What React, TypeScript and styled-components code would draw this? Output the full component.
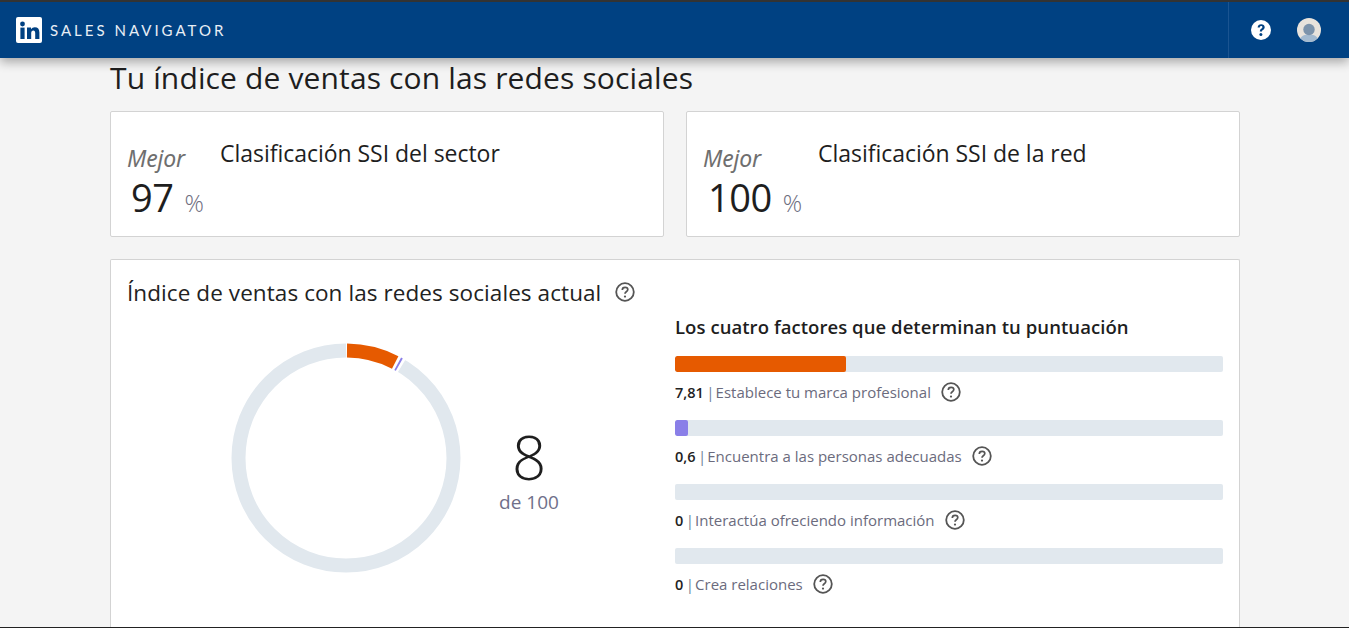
import React from "react";
import styled, { createGlobalStyle } from "styled-components";

const Global = createGlobalStyle`
  html, body { margin: 0; padding: 0; height: 100%; overflow: hidden; background: #f4f4f4; }
  body { font-family: "Open Sans", "Noto Sans", "Liberation Sans", sans-serif; color: #1f1f1f; }
`;
const Page = styled.div`
  height: 628px; box-sizing: border-box; overflow: hidden;
  display: flex; flex-direction: column;
  border-top: 2px solid #333; border-bottom: 1px solid #222;
`;
const Header = styled.header`
  flex: none; height: 56px; background: #004182; display: flex; align-items: stretch;
  box-shadow: 0 4px 10px rgba(0,0,0,.32); position: relative; z-index: 1;
`;
const Brand = styled.div`
  flex: 1; display: flex; align-items: center; padding-left: 16px; gap: 8px;
`;
const BrandName = styled.span`
  color: #e8eef5; font-size: 15px; letter-spacing: 3px; font-family: "Lato", sans-serif;
`;
const Actions = styled.div`
  width: 121px; border-left: 1px solid #1a5491; display: flex; align-items: center;
  padding-left: 22px; gap: 26px; box-sizing: border-box;
`;
const Main = styled.main`
  flex: 1; min-height: 0; width: 1130px; margin-left: 110px; display: flex; flex-direction: column;
`;
const Title = styled.h1`
  margin: 0; font-weight: 400; font-size: 30px; line-height: 40px; height: 53px;
  color: #1e1e1e; letter-spacing: .14px;
`;
const Cards = styled.div`
  display: grid; grid-template-columns: 554px 554px; gap: 22px;
`;
const Card = styled.section`
  height: 126px; box-sizing: border-box; background: #fff; border: 1px solid #d3d3d3; border-radius: 2px;
  display: flex; align-items: flex-start; padding: 29px 0 0 16px;
`;
const Score = styled.div`
  width: ${(p: { $wide: number }) => p.$wide}px; flex: none;
`;
const Best = styled.div`
  font-style: italic; font-size: 23px; line-height: 34px; color: #6f6f6f; font-family: "Noto Sans", sans-serif; letter-spacing: -.2px;
`;
const Pct = styled.div`
  display: flex; align-items: baseline; padding-left: ${(p: { $pad: number }) => p.$pad}px; margin-top: -3px; line-height: 50px;
`;
const Num = styled.span`font-size: 38px; color: #1e1e1e; letter-spacing: -.5px;`;
const Sign = styled.span`font-size: 24px; font-weight: 300; color: #6e6e80; margin-left: 11px;`;
const CardTitle = styled.h2`
  margin: -3px 0 0; font-weight: 400; font-size: 23px; line-height: 30px; color: #1e1e1e; letter-spacing: -.03px;
`;
const Panel = styled.section`
  margin-top: 22px; flex: 1; min-height: 0; background: #fff; border: 1px solid #d3d3d3; border-bottom: 0;
  border-radius: 2px 2px 0 0; display: flex; flex-direction: column; padding: 17px 16px 0;
`;
const PanelHead = styled.div`display: flex; align-items: center; gap: 14px; height: 30px;`;
const PanelTitle = styled.h2`
  margin: 2px 0 0; font-weight: 400; font-size: 22.5px; line-height: 30px; color: #222; letter-spacing: .08px;
`;
const Body = styled.div`display: flex;`;
const Chart = styled.div`
  width: 548px; flex: none; display: flex; align-items: flex-start; padding: 36px 0 0 104px; box-sizing: border-box;
`;
const Total = styled.div`
  margin-left: 38px; width: 60px; display: flex; flex-direction: column; align-items: center; padding-top: 81px;
`;
const Big = styled.div`font-size: 60px; line-height: 66px; font-weight: 300; color: #1e1e1e;`;
const Of = styled.div`font-size: 19px; line-height: 24px; color: #70708a; white-space: nowrap;`;
const Factors = styled.div`flex: 1; padding-top: 7px;`;
const FactorsTitle = styled.h3`
  margin: 0 0 16px; font-size: 18.5px; line-height: 26px; font-weight: 600; color: #1e1e1e; letter-spacing: .06px;
`;
const Factor = styled.div`height: 64px;`;
const Track = styled.div`height: 16px; background: #e1e8ee; border-radius: 2px; overflow: hidden;`;
const Fill = styled.div<{ $color: string }>`height: 100%; background: ${p => p.$color}; border-radius: 2px;`;
const FactorLabel = styled.div`
  display: flex; align-items: center; height: 24px; margin-top: 8px; font-size: 15px; color: #6b6b7d;
`;
const Val = styled.b`font-size: 14.5px; font-weight: 600; color: #222;`;
const Bar = styled.span`margin: 0 1px 0 2.5px; color: #6b7f99;`;
const HelpWrap = styled.span`display: inline-flex; margin-left: 10px;`;

const Help = ({ size = 20 }: { size?: number }) => (
  <svg width={size} height={size} viewBox="0 0 20 20" fill="none">
    <circle cx="10" cy="10" r="8.8" stroke="#555" strokeWidth="1.8" />
    <path d="M7.3 7.9c0-1.6 1.2-2.6 2.8-2.6s2.7 1 2.7 2.3c0 1-.6 1.6-1.5 2.2-.9.6-1.3 1-1.3 2" stroke="#555" strokeWidth="1.7" />
    <circle cx="10" cy="14.6" r="1.1" fill="#555" />
  </svg>
);
const Logo = () => (
  <svg width="26" height="26" viewBox="0 0 26 26">
    <rect width="26" height="26" rx="2" fill="#fff" />
    <circle cx="6.5" cy="7" r="2.4" fill="#004182" />
    <rect x="4.4" y="10.6" width="4.2" height="11.4" fill="#004182" />
    <path d="M11 10.6h4v1.7c.8-1.3 2.2-2 3.8-2 3.1 0 4.6 1.9 4.6 5.1V22h-4.2v-5.8c0-1.7-.6-2.6-1.9-2.6s-2.1 1-2.1 2.6V22H11z" fill="#004182" />
  </svg>
);
const HeadHelp = () => (
  <svg width="20" height="20" viewBox="0 0 20 20">
    <circle cx="10" cy="10" r="10" fill="#fff" />
    <path d="M6.6 7.6C6.7 5.5 8.1 4.3 10.2 4.3c2.1 0 3.5 1.2 3.5 3 0 1.3-.7 2-1.7 2.7-.8.5-1 .8-1 1.6H8.8c0-1.5.4-2.2 1.4-2.9.8-.5 1.2-.9 1.2-1.5 0-.7-.5-1.1-1.2-1.1-.8 0-1.3.5-1.4 1.5z" fill="#004182" />
    <circle cx="9.9" cy="14.4" r="1.5" fill="#004182" />
  </svg>
);
const Avatar = () => (
  <svg width="24" height="24" viewBox="0 0 24 24">
    <defs><clipPath id="av"><circle cx="12" cy="12" r="12" /></clipPath></defs>
    <g clipPath="url(#av)">
      <rect width="24" height="24" fill="#e8e3dc" />
      <path d="M2 24c1-6 5-7.5 10-7.5s9 1.5 10 7.5z" fill="#a3bad0" />
      <circle cx="12" cy="11.5" r="5.7" fill="#7c93ab" />
    </g>
  </svg>
);

const R = 107.5;
const C = 2 * Math.PI * R;
const Donut = () => (
  <svg width="230" height="230" viewBox="0 0 230 230">
    <circle cx="115" cy="115" r={R} fill="none" stroke="#e1e8ee" strokeWidth="14" />
    <g transform="rotate(-90 115 115)" fill="none" strokeWidth="14">
      <circle cx="115" cy="115" r={R} stroke="#fff" strokeWidth="16" strokeDasharray={`${C * 0.0865} ${C}`} />
      <circle cx="115" cy="115" r={R} stroke="#e65a00" strokeDasharray={`${C * 0.0741} ${C}`} strokeDashoffset={-C * 0.0015} />
      <circle cx="115" cy="115" r={R} stroke="#8a7fe8" strokeDasharray={`${C * 0.0028} ${C}`} strokeDashoffset={-C * 0.0798} />
    </g>
  </svg>
);

const factors = [
  { v: "7,81", label: "Establece tu marca profesional", w: 31.2, c: "#e65a00" },
  { v: "0,6", label: "Encuentra a las personas adecuadas", w: 2.4, c: "#8a7fe8" },
  { v: "0", label: "Interactúa ofreciendo información", w: 0, c: "#e65a00" },
  { v: "0", label: "Crea relaciones", w: 0, c: "#e65a00" },
];

export default function App() {
  return (
    <>
      <Global />
      <Page>
        <Header>
          <Brand><Logo /><BrandName>SALES NAVIGATOR</BrandName></Brand>
          <Actions><HeadHelp /><Avatar /></Actions>
        </Header>
        <Main>
          <Title>Tu índice de ventas con las redes sociales</Title>
          <Cards>
            <Card>
              <Score $wide={93}>
                <Best>Mejor</Best>
                <Pct $pad={4}><Num>97</Num><Sign>%</Sign></Pct>
              </Score>
              <CardTitle>Clasificación SSI del sector</CardTitle>
            </Card>
            <Card>
              <Score $wide={115}>
                <Best>Mejor</Best>
                <Pct $pad={5}><Num>100</Num><Sign>%</Sign></Pct>
              </Score>
              <CardTitle>Clasificación SSI de la red</CardTitle>
            </Card>
          </Cards>
          <Panel>
            <PanelHead>
              <PanelTitle>Índice de ventas con las redes sociales actual</PanelTitle>
              <Help />
            </PanelHead>
            <Body>
              <Chart>
                <Donut />
                <Total><Big>8</Big><Of>de 100</Of></Total>
              </Chart>
              <Factors>
                <FactorsTitle>Los cuatro factores que determinan tu puntuación</FactorsTitle>
                {factors.map(f => (
                  <Factor key={f.label}>
                    <Track><Fill $color={f.c} style={{ width: `${f.w}%` }} /></Track>
                    <FactorLabel>
                      <Val>{f.v}</Val><Bar>|</Bar>{f.label}
                      <HelpWrap><Help /></HelpWrap>
                    </FactorLabel>
                  </Factor>
                ))}
              </Factors>
            </Body>
          </Panel>
        </Main>
      </Page>
    </>
  );
}
